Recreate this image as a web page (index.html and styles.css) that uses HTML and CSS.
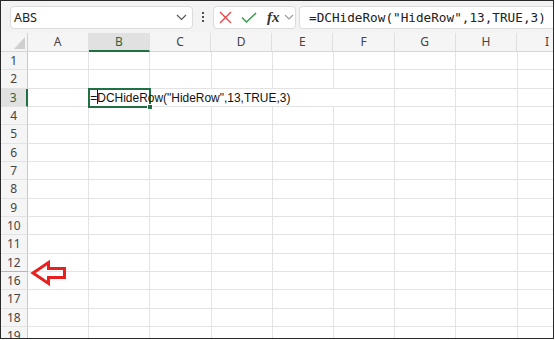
FILE: index.html
```html
<!DOCTYPE html>
<html>
<head>
<meta charset="utf-8">
<link rel="stylesheet" href="styles.css">
</head>
<body>
<div class="frame">
  <div class="toolbar">
    <div class="namebox">
      <span>ABS</span>
      <svg class="chev" width="11" height="7" viewBox="0 0 11 7"><polyline points="1,1 5.5,5.5 10,1" fill="none" stroke="#555" stroke-width="1.2"/></svg>
    </div>
    <div class="dots"><i></i><i></i><i></i></div>
    <div class="fxbox">
      <svg class="ic-x" width="13" height="13" viewBox="0 0 13 13"><path d="M1 1 L12 12 M12 1 L1 12" stroke="#e0484a" stroke-width="1.4" fill="none"/></svg>
      <svg class="ic-ok" width="16" height="11" viewBox="0 0 16 11"><polyline points="1,5.5 5.5,10 15,1" fill="none" stroke="#3a9b4c" stroke-width="1.5"/></svg>
      <span class="fx">fx</span>
      <svg class="chev2" width="10" height="6" viewBox="0 0 10 6"><polyline points="1,1 5,5 9,1" fill="none" stroke="#9a9a9a" stroke-width="1.1"/></svg>
    </div>
    <div class="formula">=DCHideRow("HideRow",13,TRUE,3)</div>
  </div>

  <div class="sheet">
    <div class="colhead">
      <div class="corner"><svg width="26" height="19" viewBox="0 0 26 19"><polygon points="24,4 24,16 13,16" fill="#cfcfcf"/></svg></div>
      <div class="ch">A</div>
      <div class="ch sel">B</div>
      <div class="ch">C</div>
      <div class="ch">D</div>
      <div class="ch">E</div>
      <div class="ch">F</div>
      <div class="ch">G</div>
      <div class="ch">H</div>
      <div class="ch">I</div>
    </div>
    <div class="row"><div class="rh">1</div><div class="cells"></div></div>
    <div class="row"><div class="rh">2</div><div class="cells"></div></div>
    <div class="row"><div class="rh sel">3</div><div class="cells">
      <div class="active"><span class="txt">=<span class="caret"></span>DCHideRow("HideRow",13,TRUE,3)</span><i class="handle"></i></div>
      <div class="spill"></div>
    </div></div>
    <div class="row"><div class="rh">4</div><div class="cells"></div></div>
    <div class="row"><div class="rh">5</div><div class="cells"></div></div>
    <div class="row"><div class="rh">6</div><div class="cells"></div></div>
    <div class="row"><div class="rh">7</div><div class="cells"></div></div>
    <div class="row"><div class="rh">8</div><div class="cells"></div></div>
    <div class="row"><div class="rh">9</div><div class="cells"></div></div>
    <div class="row"><div class="rh">10</div><div class="cells"></div></div>
    <div class="row"><div class="rh">11</div><div class="cells"></div></div>
    <div class="row hidden-after"><div class="rh">12</div><div class="cells"></div></div>
    <div class="row"><div class="rh">16</div><div class="cells"></div></div>
    <div class="row"><div class="rh">17</div><div class="cells"></div></div>
    <div class="row"><div class="rh">18</div><div class="cells"></div></div>
    <div class="row"><div class="rh">19</div><div class="cells"></div></div>
  </div>

  <svg class="arrow" width="554" height="339" viewBox="0 0 554 339">
    <polygon points="33,273 48.5,262.5 48.5,268.5 64.5,268.5 64.5,277.5 48.5,277.5 48.5,283.5" fill="none" stroke="#e8201e" stroke-width="3" stroke-linejoin="miter"/>
  </svg>
</div>
</body>
</html>
```

FILE: styles.css
```css
* { box-sizing: border-box; }
body { margin: 0; background: #fff; font-family: "Noto Sans", "Open Sans", sans-serif; }

.frame {
  position: relative;
  width: 554px;
  height: 339px;
  border: 1px solid #2a2a2a;
  overflow: hidden;
  background: #fff;
}

/* toolbar */
.toolbar {
  height: 32px;
  background: #f3f3f3;
  display: flex;
  align-items: center;
  padding-left: 9px;
}
.namebox {
  width: 183px;
  height: 23px;
  background: #fff;
  border: 1px solid #dcdcdc;
  border-radius: 4px;
  display: flex;
  align-items: center;
  justify-content: space-between;
  padding: 0 5px 0 3px;
  font-size: 12.5px;
  color: #222;
}
.dots {
  margin-left: 9px;
  width: 2px;
  display: flex;
  flex-direction: column;
  gap: 2px;
}
.dots i { display: block; width: 2px; height: 2px; background: #505050; }
.fxbox {
  margin-left: 9px;
  width: 83px;
  height: 23px;
  background: #fff;
  border: 1px solid #dcdcdc;
  border-radius: 4px;
  display: flex;
  align-items: center;
  padding-left: 5px;
}
.ic-ok { margin-left: 9px; }
.fx {
  margin-left: 10px;
  font-family: "Liberation Serif", "DejaVu Serif", serif;
  font-style: italic;
  font-weight: bold;
  font-size: 15px;
  color: #333;
  line-height: 1;
}
.chev2 { margin-left: 4px; }
.formula {
  margin-left: 3px;
  margin-right: -6px;
  flex: 1;
  height: 23px;
  background: #fff;
  border: 1px solid #dcdcdc;
  border-radius: 4px;
  padding-left: 9px;
  font-family: "DejaVu Sans Mono", "Liberation Mono", monospace;
  font-size: 12.7px;
  line-height: 21px;
  color: #222;
  white-space: nowrap;
}

/* sheet */
.colhead {
  height: 19px;
  display: flex;
  background: #f5f5f5;
  border-bottom: 1px solid #d6d6d6;
}
.corner {
  width: 26.5px;
  flex: none;
  border-right: 1px solid #d0d0d0;
}
.corner svg { display: block; }
.ch {
  width: 61.2px;
  flex: none;
  border-right: 1px solid #e0e0e0;
  text-align: center;
  font-size: 12px;
  line-height: 18px;
  color: #444;
}
.ch.sel {
  background: #e1e1e1;
  color: #1e6b41;
  border-bottom: 2px solid #1f7145;
  margin-bottom: -1px;
}

.row {
  height: 18.33px;
  display: flex;
}
.rh {
  width: 26.5px;
  flex: none;
  background: #f5f5f5;
  border-right: 1px solid #c9c9c9;
  border-bottom: 1px solid #e3e3e3;
  text-align: center;
  font-size: 12px;
  line-height: 17.5px;
  color: #444;
}
.rh.sel {
  background: #e1e1e1;
  color: #1e6b41;
  border-right: 2px solid #1f7145;
}
.hidden-after .rh { border-bottom: 1px solid #b5b5b5; }
.cells {
  flex: 1;
  display: flex;
  border-bottom: 1px solid #e3e3e3;
  background-image: repeating-linear-gradient(to right, transparent 0 60.2px, #e3e3e3 60.2px 61.2px);
}

.active {
  position: relative;
  z-index: 1;
  flex: none;
  margin-left: 60.2px;
  margin-top: -1px;
  width: 63px;
  height: 20.33px;
  border: 2px solid #1f7145;
  white-space: nowrap;
}
.txt {
  display: block;
  font-family: "Liberation Sans", "Arial", sans-serif;
  font-size: 13.5px;
  line-height: 16px;
  color: #111;
  padding-left: 0.3px;
  transform: scaleX(0.885);
  transform-origin: 0 50%;
}
.caret {
  display: inline-block;
  width: 1.1px;
  height: 14px;
  background: #000;
  vertical-align: -2px;
  margin-right: -1px;
}
.handle {
  position: absolute;
  right: -4px;
  bottom: -4px;
  width: 6px;
  height: 6px;
  background: #1f7145;
  border: 1px solid #fff;
}
.spill {
  flex: none;
  width: 183px;
  height: 17.33px;
  background: #fff;
}

.arrow {
  position: absolute;
  left: -1px;
  top: -1px;
  pointer-events: none;
}
```
